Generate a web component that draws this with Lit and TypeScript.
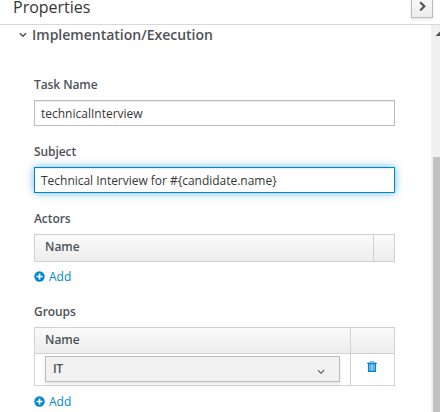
import { LitElement, html, css, svg } from "lit";
import { customElement } from "lit/decorators.js";

const plus = html`<svg class="plus" width="11" height="11" viewBox="0 0 11 11">
  <circle cx="5.5" cy="5.5" r="5.2" fill="#0088ce" />
  <path d="M5.5 2.4v6.2M2.4 5.5h6.2" stroke="#fff" stroke-width="1.7" />
</svg>`;

const trash = html`<svg class="trash" width="10" height="11" viewBox="0 0 10 11">
  <path d="M3 1.6V.6h4v1" fill="none" stroke="#0088ce" stroke-opacity=".55" stroke-width="1" />
  <path d="M.3 1.8h9.4V3H.3z" fill="#0079bd" />
  <path d="M1.7 2.6h6.6v7.6H1.7z" fill="#d5eaf6" stroke="#0088ce" stroke-width="1.6" />
  <path d="M3.5 3.5v6M5 3.5v6M6.5 3.5v6" stroke="#3a94cc" stroke-width=".8" />
</svg>`;

const chevron = (cls: string, w: number, color: string, sw: number) => html`<svg
  class=${cls} width=${w} height="6" viewBox="0 0 8 6">
  ${svg`<path d="M.9 1.2 4 4.3 7.1 1.2" fill="none" stroke=${color} stroke-width=${sw} />`}
</svg>`;

@customElement("app-root")
export class AppRoot extends LitElement {
  static styles = css`
    :host {
      display: flex;
      flex-direction: column;
      width: 440px;
      height: 412px;
      overflow: hidden;
      background: #fff;
      color: #363636;
      font: 12px/20px "Open Sans", sans-serif;
    }
    * { box-sizing: border-box; }
    .header {
      flex: none;
      display: flex;
      justify-content: space-between;
      height: 25px;
      padding: 0 7px 0 13px;
      border-bottom: 1px solid #d8d8d8;
    }
    .title { font-size: 16px; line-height: 14px; }
    .collapse {
      width: 22px;
      height: 24px;
      margin-top: -6px;
      padding: 6px 0 0 7px;
      border: 1px solid #bbb;
      background: linear-gradient(#fafafa, #ededed);
      box-shadow: 0 2px 3px rgba(3, 3, 3, 0.1);
    }
    .collapse svg { display: block; }
    .body { flex: 1; display: flex; min-height: 0; }
    .content { flex: 1; min-width: 0; padding-left: 34px; }
    .section {
      display: flex;
      align-items: center;
      height: 20px;
      margin-left: -15px;
      gap: 5px;
      font-size: 14px;
      font-weight: 600;
      color: #4d5258;
    }
    .form { width: 361px; padding-top: 30px; }
    .label { height: 20px; font-weight: 600; letter-spacing: -0.08px; color: #4d5258; }
    .input {
      height: 26px;
      margin: 5px 0 16px;
      padding: 3px 6px 1px;
      border: 1px solid #bbb;
      box-shadow: inset 0 1px 1px rgba(3, 3, 3, 0.075);
    }
    .focus {
      border-color: #0088ce;
      letter-spacing: -0.02px;
      box-shadow: inset 0 1px 1px rgba(3, 3, 3, 0.075), 0 0 8px rgba(0, 136, 206, 0.6);
    }
    .table { margin-top: 5px; border: 1px solid #d1d1d1; }
    .row { display: grid; grid-template-columns: 1fr 21px; }
    .wide .row { grid-template-columns: 1fr 44px; }
    .head {
      height: 26px;
      font-weight: 600;
      color: #4d5258;
      background: linear-gradient(#fafafa, #ededed);
    }
    .wide .head { height: 25px; }
    .cell { padding: 2px 10px; min-width: 0; }
    .cell + .cell { border-left: 1px solid #d1d1d1; }
    .line { height: 32px; border-top: 1px solid #d1d1d1; }
    .line .cell { padding: 2px 10px; }
    .line .cell + .cell { padding: 7px 0 0 16px; }
    .select {
      display: flex;
      justify-content: space-between;
      width: 295px;
      height: 26px;
      padding: 2px 14px 0 7px;
      border: 1px solid #bbb;
      background: #f1f1f1;
      font-weight: 600;
      letter-spacing: -0.3px;
      color: #4d5258;
      box-shadow: 0 2px 3px rgba(3, 3, 3, 0.1);
    }
    .arrow { margin-top: 10px; }
    .trash { display: block; }
    .add {
      display: flex;
      align-items: center;
      gap: 4px;
      height: 20px;
      margin: 5px 0 15px;
      color: #0088ce;
    }
    .plus { margin-top: -1px; }
    .wide + .add { margin-top: 6px; }
    .scroll { width: 9px; background: #f0f0f0; padding-left: 2px; overflow: hidden; }
    .up { display: block; height: 132px; }
    .thumb { height: 255px; background: #c1c1c1; }
  `;

  render() {
    return html`
      <div class="header">
        <div class="title">Properties</div>
        <div class="collapse">
          <svg width="8" height="11" viewBox="0 0 8 11">
            <path d="M1.2 1.2 5.3 5.3 1.2 9.4" fill="none" stroke="#4d5258" stroke-width="2.1" />
          </svg>
        </div>
      </div>
      <div class="body">
        <div class="content">
          <div class="section">${chevron("caret", 8, "#4d5258", 1.5)}<span>Implementation/Execution</span></div>
          <div class="form">
            <div class="label">Task Name</div>
            <div class="input">technicalInterview</div>
            <div class="label">Subject</div>
            <div class="input focus">Technical Interview for #{candidate.name}</div>
            <div class="label">Actors</div>
            <div class="table">
              <div class="row head"><div class="cell">Name</div><div class="cell"></div></div>
            </div>
            <div class="add">${plus}<span>Add</span></div>
            <div class="label">Groups</div>
            <div class="table wide">
              <div class="row head"><div class="cell">Name</div><div class="cell"></div></div>
              <div class="row line">
                <div class="cell"><div class="select"><span>IT</span>${chevron("arrow", 8, "#4d5258", 1.1)}</div></div>
                <div class="cell">${trash}</div>
              </div>
            </div>
            <div class="add">${plus}<span>Add</span></div>
          </div>
        </div>
        <div class="scroll">
          <svg class="up" width="7" height="132" viewBox="0 0 7 132"><path d="M2.5 11 7 6.5V11z" fill="#505050" /></svg>
          <div class="thumb"></div>
        </div>
      </div>
    `;
  }
}
